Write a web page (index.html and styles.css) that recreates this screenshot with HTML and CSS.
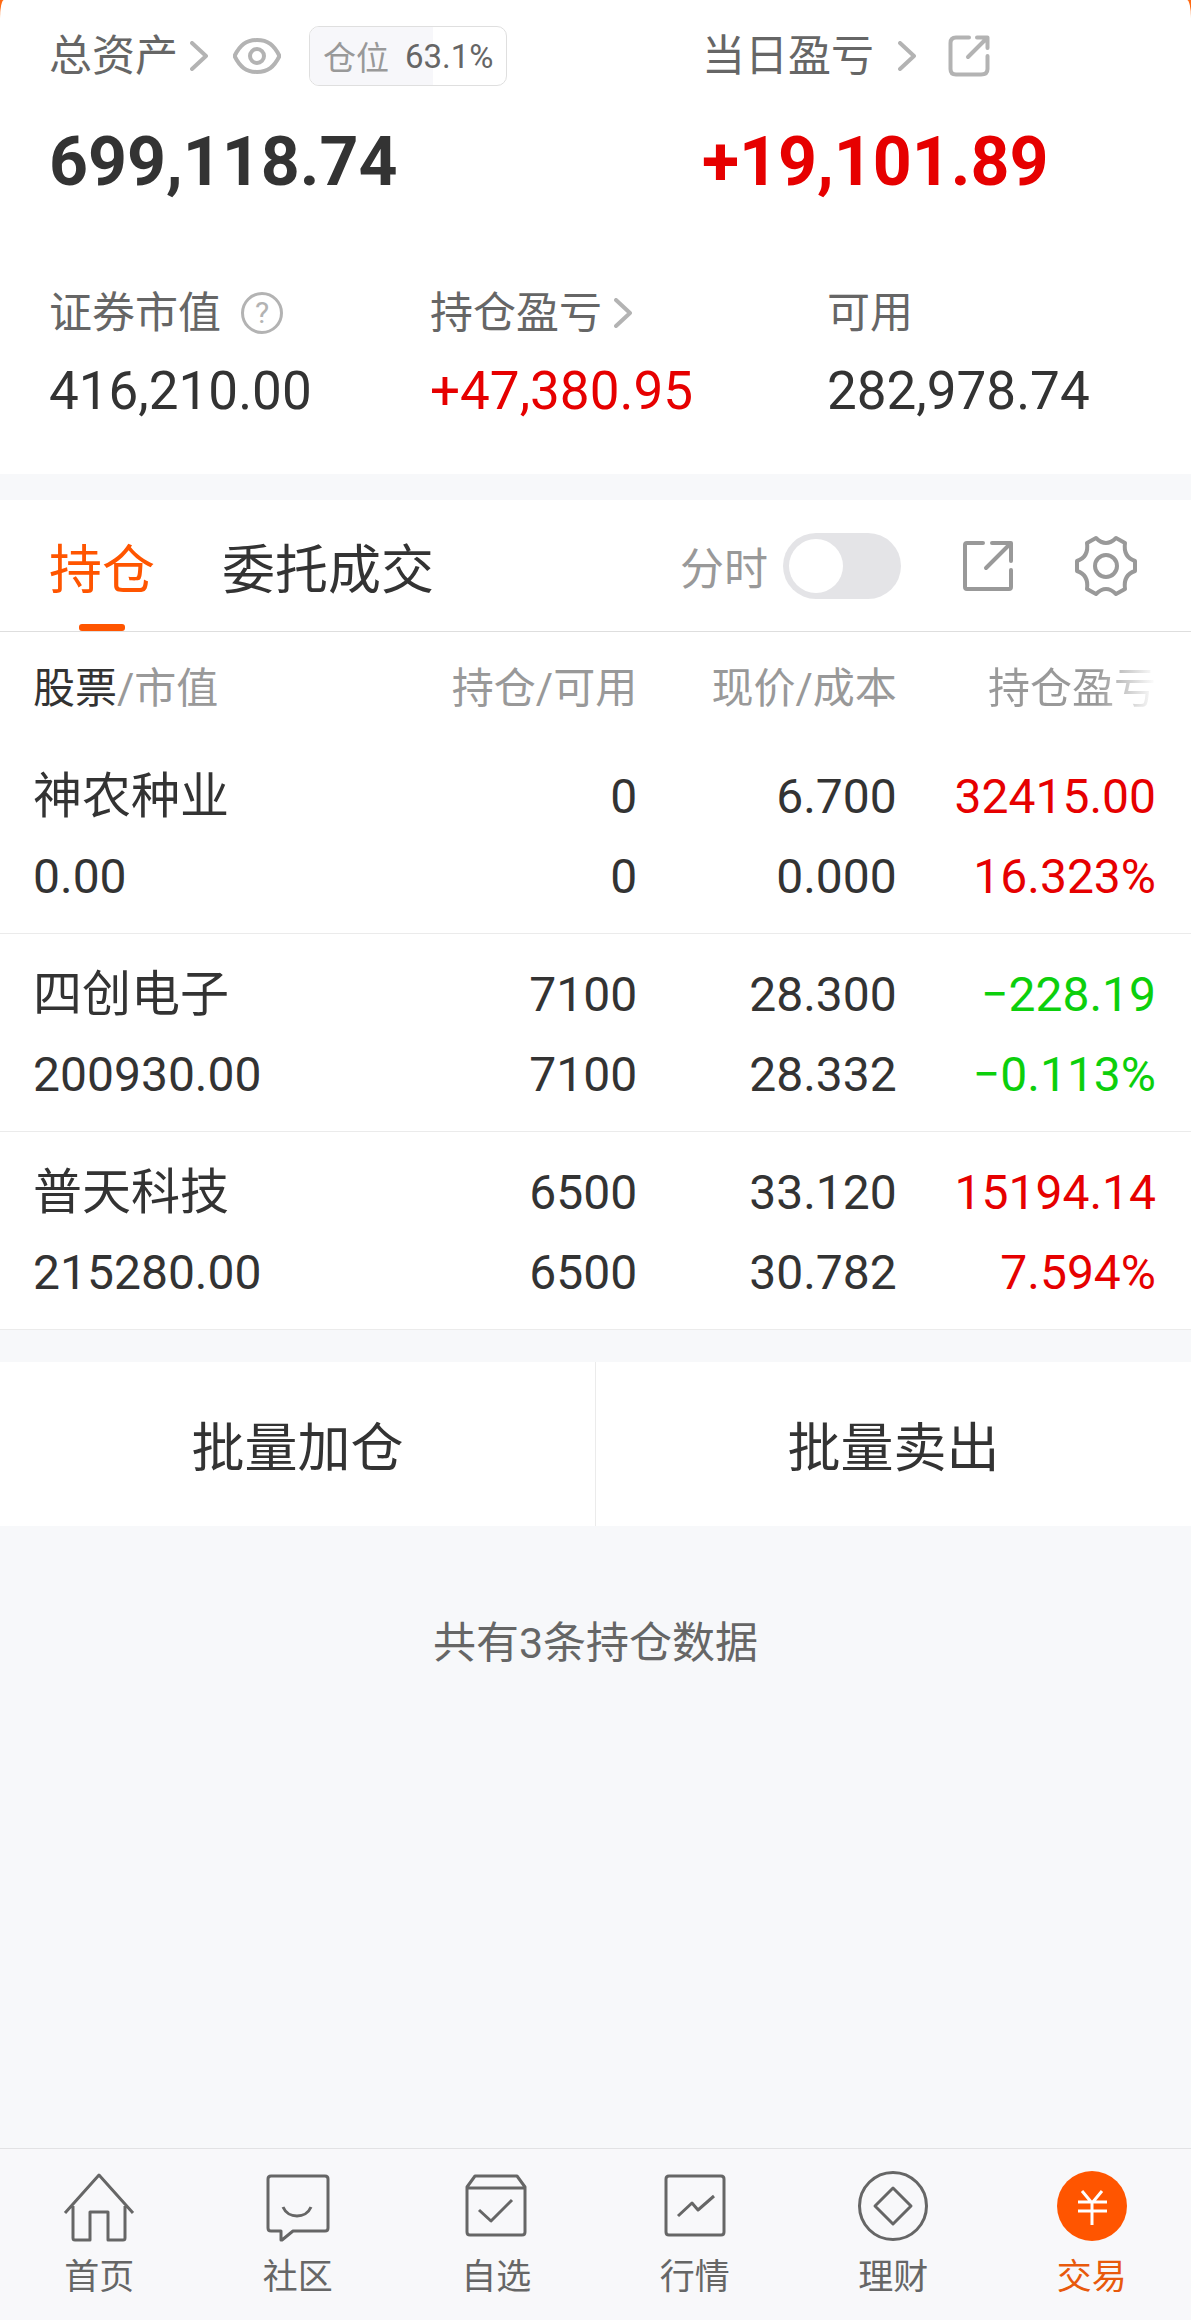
FILE: index.html
```
<!DOCTYPE html>
<html lang="zh-CN">
  <head>
    <meta charset="UTF-8" />
    <meta name="viewport" content="width=device-width, initial-scale=1.0" />
    <title>交易</title>
    <link rel="stylesheet" href="styles.css">
  </head>
  <body>
    <header class="account">
      <div class="summary">
        <div class="summary-row totals">
          <section>
            <div class="label">
              <a href="#assets" class="label-link">总资产
                <svg class="chevron" viewBox="0 0 18 30"><path d="M2 2 L16 15 L2 28" /></svg>
              </a>
              <button class="icon-button eye" aria-label="隐藏金额">
                <svg width="48" height="38" viewBox="0 0 48 38"><path d="M1.500 19 C7 8 13 3 24 3 S41 8 46.500 19 C41 30 35 35 24 35 S7 30 1.500 19 Z" /><circle cx="24" cy="19" r="7" /></svg>
              </button>
              <span class="position">
                <span class="position-fill" style="width: 63.1%"></span>
                <span class="position-name">仓位</span>
                <span class="position-value">63.1%</span>
              </span>
            </div>
            <div class="total">699,118.74</div>
          </section>
          <section>
            <div class="label">
              <a href="#today" class="label-link spaced">当日盈亏
                <svg class="chevron" viewBox="0 0 18 30"><path d="M2 2 L16 15 L2 28" /></svg>
              </a>
              <button class="icon-button share" aria-label="分享当日盈亏">
                <svg width="42" height="42" viewBox="0 0 42 42"><path d="M21 2.500 H8 Q2.500 2.500 2.500 8 V34 Q2.500 39.500 8 39.500 H33 Q39.500 39.500 39.500 34 V21 M29 2.500 H39.500 V13 M39 3 L20 22" /></svg>
              </button>
            </div>
            <div class="total up">+19,101.89</div>
          </section>
        </div>

        <div class="summary-row details">
          <section>
            <div class="label">证券市值 <button class="help" aria-label="证券市值说明">?</button></div>
            <div class="amount">416,210.00</div>
          </section>
          <section>
            <div class="label">
              <a href="#profit" class="label-link">持仓盈亏
                <svg class="chevron" viewBox="0 0 18 30"><path d="M2 2 L16 15 L2 28" /></svg>
              </a>
            </div>
            <div class="amount up">+47,380.95</div>
          </section>
          <section>
            <div class="label">可用</div>
            <div class="amount">282,978.74</div>
          </section>
        </div>
      </div>
    </header>

    <main>
      <div class="tabs">
        <button class="tab active">持仓</button>
        <button class="tab">委托成交</button>
        <div class="tools">
          <label class="switch-label" for="minute-chart">分时</label>
          <input class="switch" type="checkbox" role="switch" id="minute-chart" />
          <button class="icon-button" aria-label="分享持仓">
            <svg width="54" height="54" viewBox="0 0 54 54"><path d="M22 4 H6 Q4 4 4 6 V48 Q4 50 6 50 H48 Q50 50 50 48 V31 M31 4 H50 V22 M49 5 L25 29" /></svg>
          </button>
          <button class="icon-button" aria-label="设置">
            <svg width="62" height="62" viewBox="0 0 62 62"><path d="M21 3 Q31 13 41 3 L50 8 Q48 22 60 26 V36 Q48 40 50 54 L41 59 Q31 49 21 59 L12 54 Q14 40 2 36 V26 Q14 22 12 8 Z" /><circle cx="31" cy="31" r="11" /></svg>
          </button>
        </div>
      </div>

      <table class="holdings">
        <colgroup>
          <col class="col-stock" />
          <col class="col-position" />
          <col class="col-price" />
          <col class="col-profit" />
        </colgroup>
        <thead>
          <tr>
            <th><strong>股票</strong>/市值</th>
            <th>持仓/可用</th>
            <th>现价/成本</th>
            <th><span class="fade">持仓盈亏</span></th>
          </tr>
        </thead>
        <tbody>
          <tr>
            <td><div class="name">神农种业</div><div>0.00</div></td>
            <td><div>0</div><div>0</div></td>
            <td><div>6.700</div><div>0.000</div></td>
            <td class="up"><div>32415.00</div><div>16.323%</div></td>
          </tr>
          <tr>
            <td><div class="name">四创电子</div><div>200930.00</div></td>
            <td><div>7100</div><div>7100</div></td>
            <td><div>28.300</div><div>28.332</div></td>
            <td class="down"><div>−228.19</div><div>−0.113%</div></td>
          </tr>
          <tr>
            <td><div class="name">普天科技</div><div>215280.00</div></td>
            <td><div>6500</div><div>6500</div></td>
            <td><div>33.120</div><div>30.782</div></td>
            <td class="up"><div>15194.14</div><div>7.594%</div></td>
          </tr>
        </tbody>
      </table>

      <div class="batch">
        <button>批量加仓</button>
        <button>批量卖出</button>
      </div>

      <p class="count">共有3条持仓数据</p>
    </main>

    <nav class="bottom-nav">
      <a href="#home">
        <svg viewBox="0 0 72 72"><path d="M2 43 L36 5 L70 43 M10 36 V68 Q10 70 12 70 H27 V42 H45 V70 H60 Q62 70 62 68 V36" /></svg>
        首页
      </a>
      <a href="#community">
        <svg viewBox="0 0 72 72"><path d="M9 6 H63 Q66 6 66 9 V58 Q66 61 63 61 H31 L20 70 H19 V61 H9 Q6 61 6 58 V9 Q6 6 9 6 Z M21 37 C26 49 44 49 49 37" /></svg>
        社区
      </a>
      <a href="#watchlist">
        <svg viewBox="0 0 72 72"><path d="M15 6 H57 L65 17 V62 Q65 65 62 65 H10 Q7 65 7 62 V17 Z M7 18 H65 M19 40 L31 51 L52 30" /></svg>
        自选
      </a>
      <a href="#market">
        <svg viewBox="0 0 72 72"><path d="M10 6 H62 Q65 6 65 9 V62 Q65 65 62 65 H10 Q7 65 7 62 V9 Q7 6 10 6 Z M19 46 L33 33 L39 40 L55 26" /></svg>
        行情
      </a>
      <a href="#finance">
        <svg viewBox="0 0 72 72"><circle cx="36" cy="36" r="33.500" /><path d="M36 18 L54 36 L36 54 L18 36 Z" /></svg>
        理财
      </a>
      <a href="#trade" class="active">
        <svg viewBox="0 0 72 72"><circle class="disc" cx="36" cy="36" r="35" /><path class="mark" d="M26 21 L36 33 L46 21 M36 33 V55 M22 32 H51 M22 41 H51" /></svg>
        交易
      </a>
    </nav>
  </body>
</html>
```
FILE: styles.css
```
* {
  box-sizing: border-box;
}

body {
  margin: 0;
  min-height: 100vh;
  display: flex;
  flex-direction: column;
  background-color: #f7f8fa;
  color: #333;
  font-family: Roboto, "Noto Sans CJK SC", sans-serif;
  font-size: 43px;
}

a {
  color: inherit;
  text-decoration: none;
}

button {
  border: none;
  padding: 0;
  background: none;
  color: inherit;
  font: inherit;
  cursor: pointer;
}

svg {
  display: block;
  fill: none;
  stroke: currentColor;
  stroke-width: 4;
  stroke-linecap: round;
  stroke-linejoin: round;
}

.up {
  color: #e60000;
}

.down {
  color: #0ccf0c;
}

/* Account summary */
.account {
  background-color: #ff6a13;
}

.summary {
  background-color: #fff;
  border-radius: 4px 4px 0 0 / 18px 18px 0 0;
  padding: 18px 0 30px 49px;
}

.summary-row {
  display: grid;
}

.totals {
  grid-template-columns: 653fr 489fr;
  margin-bottom: 58px;
}

.details {
  grid-template-columns: 381fr 397fr 364fr;
}

.label {
  display: flex;
  align-items: center;
  height: 76px;
  color: #666;
  line-height: 1;
}

.label-link {
  display: flex;
  align-items: center;
  gap: 12px;
}

.label-link.spaced {
  gap: 24px;
}

.chevron {
  width: 18px;
  height: 30px;
  color: #b3b3b3;
}

.icon-button {
  color: #999;
}

.eye,
.share {
  color: #b3b3b3;
}

.eye {
  margin: 0 28px 0 25px;
}

.share {
  margin-left: 32px;
}

.position {
  position: relative;
  display: flex;
  align-items: center;
  gap: 16px;
  height: 60px;
  padding: 0 12px 0 13px;
  border: 1px solid #dfdfdf;
  border-radius: 10px;
  overflow: hidden;
  font-size: 33px;
  line-height: normal;
}

.position-fill {
  position: absolute;
  top: 0;
  bottom: 0;
  left: 0;
  background-color: #f7f7fa;
}

.position-name,
.position-value {
  position: relative;
}

.position-name {
  color: #999;
}

.total {
  font-size: 68px;
  font-weight: 700;
  line-height: 136px;
}

.help {
  width: 42px;
  height: 42px;
  margin-left: 20px;
  border: 3px solid #b3b3b3;
  border-radius: 50%;
  color: #b3b3b3;
  font-size: 30px;
  line-height: 36px;
}

.details .label {
  height: 50px;
}

.amount {
  font-size: 53px;
  line-height: 106px;
}

/* Tabs */
.tabs {
  display: flex;
  gap: 67px;
  height: 132px;
  margin-top: 26px;
  padding: 0 54px 0 49px;
  background-color: #fff;
  border-bottom: 1px solid #dedede;
}

.tab {
  position: relative;
  font-size: 53px;
}

.tab.active {
  color: #ff5500;
}

.tab.active::after {
  content: "";
  position: absolute;
  bottom: 0;
  left: 50%;
  width: 46px;
  height: 7px;
  margin-left: -23px;
  border-radius: 3px;
  background-color: #ff5500;
}

.tools {
  display: flex;
  align-items: center;
  margin-left: auto;
}

.tools .icon-button {
  margin-left: 60px;
}

.switch-label {
  margin-right: 15px;
  color: #999;
  font-size: 44px;
}

.switch {
  appearance: none;
  width: 118px;
  height: 66px;
  margin: 0;
  padding: 6px;
  border-radius: 33px;
  background-color: #e4e4e7;
  cursor: pointer;
}

.switch::before {
  content: "";
  display: block;
  width: 54px;
  height: 54px;
  border-radius: 50%;
  background-color: #fff;
}

.switch:checked {
  background-color: #ff5500;
}

.switch:checked::before {
  margin-left: auto;
}

/* Holdings */
.holdings {
  width: 100%;
  table-layout: fixed;
  border-collapse: collapse;
  background-color: #fff;
}

.col-stock {
  width: 35%;
}

.col-position {
  width: 18.5%;
}

.col-price {
  width: 21.8%;
}

.holdings th,
.holdings td {
  padding: 0;
  text-align: right;
  white-space: nowrap;
}

.holdings th {
  height: 104px;
  color: #999;
  font-size: 42px;
  font-weight: 400;
}

.holdings th strong {
  color: #333;
  font-weight: 400;
}

.fade {
  background: linear-gradient(to right, #999 65%, #fff);
  background-clip: text;
  color: transparent;
}

.holdings td {
  padding: 21px 0 16px;
  border-bottom: 1px solid #ebebeb;
  font-size: 48px;
  line-height: 80px;
}

.holdings .name {
  font-size: 49px;
}

.holdings th:first-child,
.holdings td:first-child {
  padding-left: 33px;
  text-align: left;
}

.holdings th:last-child,
.holdings td:last-child {
  padding-right: 35px;
}

/* Batch actions */
.batch {
  display: flex;
  margin-top: 32px;
  background-color: #fff;
}

.batch button {
  flex: 1;
  height: 164px;
  font-size: 53px;
}

.batch button + button {
  border-left: 1px solid #ebebeb;
}

.count {
  margin: 87px 0;
  color: #666;
  line-height: 60px;
  text-align: center;
}

/* Bottom navigation */
.bottom-nav {
  display: flex;
  margin-top: auto;
  padding: 21px 0 17px;
  border-top: 1px solid #e2e2e4;
  background-color: #f8f8fa;
}

.bottom-nav a {
  flex: 1;
  display: flex;
  flex-direction: column;
  align-items: center;
  gap: 11px;
  color: #666;
  font-size: 35px;
  line-height: 50px;
}

.bottom-nav svg {
  width: 72px;
  height: 72px;
  stroke-width: 3;
  stroke-linecap: butt;
}

.bottom-nav a.active {
  color: #e8590c;
}

.bottom-nav .disc {
  fill: #ff5500;
  stroke: none;
}

.bottom-nav .mark {
  stroke: #fff;
}
```
